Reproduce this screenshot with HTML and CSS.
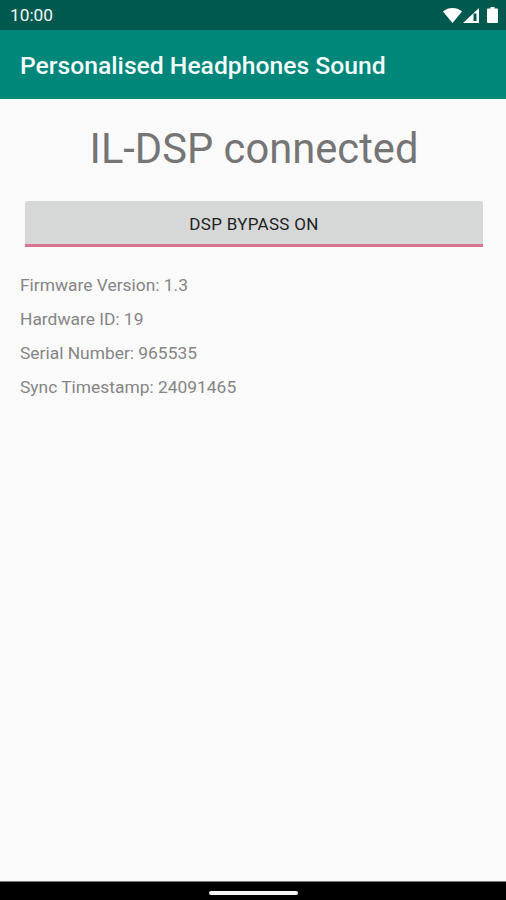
FILE: index.html
```html
<!DOCTYPE html>
<html lang="en">
<head>
<meta charset="utf-8">
<title>Personalised Headphones Sound</title>
<link rel="stylesheet" href="styles.css">
</head>
<body>
<div class="screen">
  <div class="status">
    <span class="time">10:00</span>
    <div class="icons">
      <svg class="wifi" width="19" height="15" viewBox="0 0 19 15"><path d="M0 3.400C2.700 1.200 6 0 9.500 0s6.800 1.200 9.500 3.400L9.500 15z" fill="#fff"/></svg>
      <svg class="signal" width="16" height="15" viewBox="0 0 16 15"><path d="M16 0V15H0z" fill="#fff"/><path d="M10.500 5.500h3V13h-3z" fill="#00594f"/></svg>
      <svg class="battery" width="11" height="16" viewBox="0 0 11 16"><path d="M3.500 0h4v1.500h2.500a1 1 0 0 1 1 1V15a1 1 0 0 1-1 1H1a1 1 0 0 1-1-1V2.500a1 1 0 0 1 1-1h2.500z" fill="#fff"/></svg>
    </div>
  </div>
  <header class="appbar"><h1 class="appbar-title">Personalised Headphones Sound</h1></header>
  <main class="content">
    <h2 class="heading">IL-DSP connected</h2>
    <div class="btn-wrap"><button class="btn">DSP BYPASS ON</button></div>
    <ul class="info">
      <li>Firmware Version: 1.3</li>
      <li>Hardware ID: 19</li>
      <li>Serial Number: 965535</li>
      <li>Sync Timestamp: 24091465</li>
    </ul>
  </main>
  <div class="navbar"><span class="pill"></span></div>
</div>
</body>
</html>
```
FILE: styles.css
```css
* { box-sizing: border-box; }
html, body { margin: 0; padding: 0; }
body { font-family: Roboto, "Liberation Sans", sans-serif; background: #fafafa; }
.screen { width: 506px; height: 900px; display: flex; flex-direction: column; overflow: hidden; }
.status { height: 30px; flex: none; background: #00594f; display: flex; align-items: center; justify-content: space-between; padding: 0 8px 0 10px; color: #f2f7f6; }
.time { font-size: 17.3px; line-height: 30px; }
.icons { display: flex; align-items: center; gap: 1px; }
.signal { margin-right: 7px; }
.appbar { height: 69px; flex: none; background: #00877a; display: flex; align-items: center; padding: 0 20px; }
.appbar-title { margin: 0; font-size: 24.7px; font-weight: 500; line-height: 32px; color: #f4fbfa; position: relative; top: 1px; }
.content { flex: 1; background: #fafafa; display: flex; flex-direction: column; }
.heading { margin: 25px 0 0; padding-left: 2px; text-align: center; font-size: 41.7px; font-weight: 400; line-height: 50px; color: #757575; }
.btn-wrap { padding: 27px 23px 0 25px; }
.btn { display: block; width: 100%; height: 46px; padding: 3px 0 0; border: 0; border-bottom: 3px solid #d9748f; border-radius: 2px 2px 0 0; background: #d6d8d8; color: #222; font-family: inherit; font-size: 17px; font-weight: 400; letter-spacing: .3px; }
.info { list-style: none; margin: 21px 0 0; padding: 0 0 0 20px; color: #858585; font-size: 17.4px; line-height: 34px; }
.navbar { height: 19px; flex: none; background: #000; border-top: 1px solid #777; display: flex; justify-content: center; padding-top: 9px; }
.pill { width: 89px; height: 4px; background: #f4f4f4; border-radius: 2px; }
```
